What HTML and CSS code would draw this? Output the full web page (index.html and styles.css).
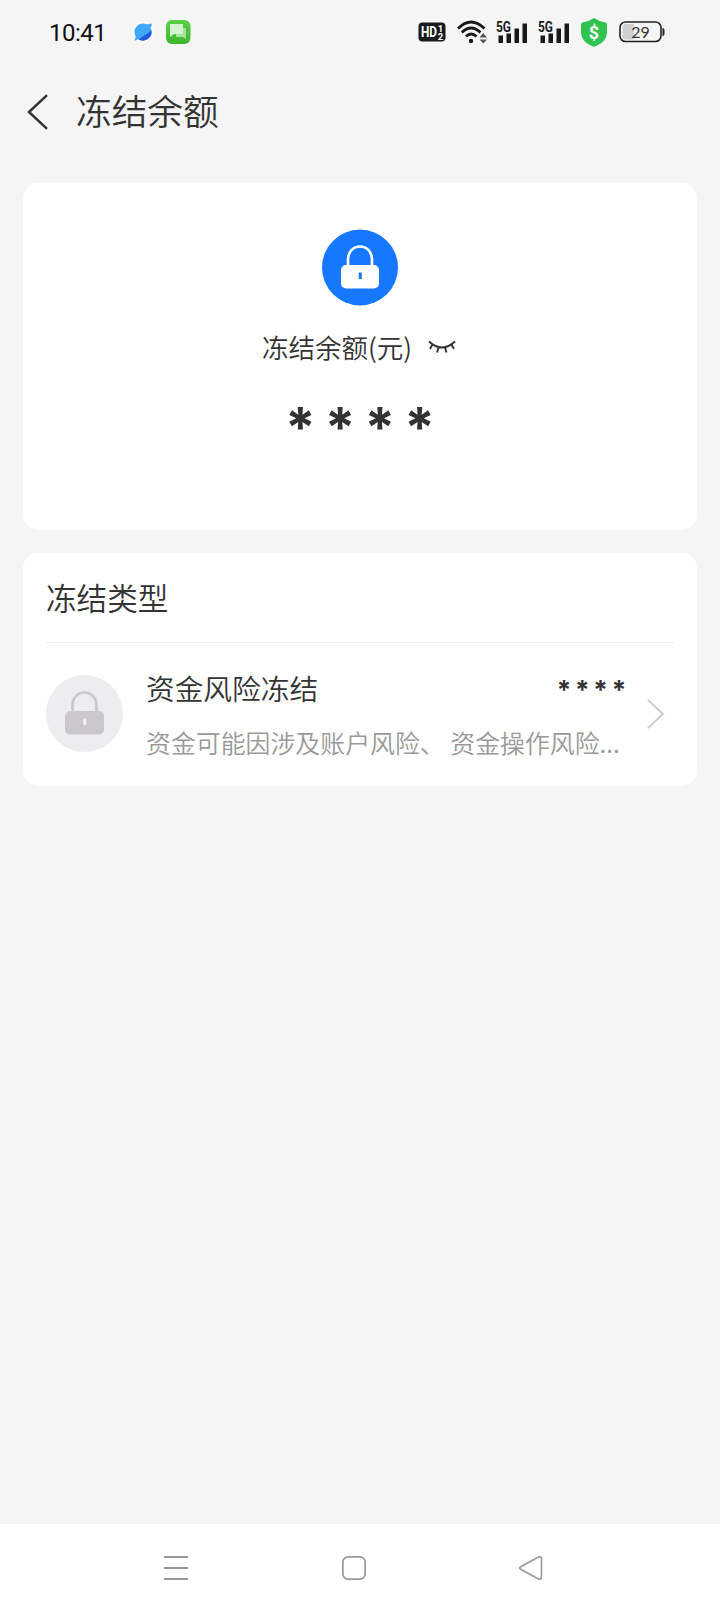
FILE: index.html
```
<!DOCTYPE html>
<html lang="zh-CN">
<head>
    <meta charset="UTF-8">
    <meta name="viewport" content="width=device-width, initial-scale=1.0">
    <title>冻结余额</title>
    <link rel="stylesheet" href="styles.css">
</head>
<body>

<!-- Status bar -->
<div class="status-bar">
    <span class="time">10:41</span>
    <svg class="app-icons" width="60" height="26" viewBox="0 0 60 26">
        <defs>
            <linearGradient id="green" x1="0" y1="0" x2="0" y2="1">
                <stop offset="0" stop-color="#5ad045"/>
                <stop offset="1" stop-color="#3db52f"/>
            </linearGradient>
        </defs>
        <rect x="0" y="2" width="23" height="23" rx="6" fill="#f8f8fa"/>
        <circle cx="11" cy="13" r="8.500" fill="#41a9fb"/>
        <path d="M19.300 11A8.500 8.500 0 0 1 5.500 19.500Q14 17 19.300 11z" fill="#1c5de6"/>
        <path d="M3 20.500Q1.500 22 4 21.200Q14 17 19.500 7Q20.500 4 18.500 4.600L14 6L4 16z" fill="#41a9fb"/>
        <rect x="34" y="1" width="24.500" height="24" rx="6" fill="url(#green)"/>
        <path d="M44 9h10v11l-3-2h-7z" fill="#a5e29a"/>
        <path d="M38 5h13v10h-9l-4 3z" fill="#d5f3d0"/>
    </svg>

    <div class="status-icons">
        <svg width="28" height="20" viewBox="0 0 28 20">
            <rect x="0.500" y="0.500" width="27" height="19" rx="4" fill="#191919"/>
            <text x="3" y="15" textLength="16" lengthAdjust="spacingAndGlyphs" class="hd">HD</text>
            <text x="19.800" y="9.500" class="hd-num">1</text>
            <text x="19.800" y="17.500" class="hd-num">2</text>
        </svg>
        <svg class="wifi" width="31" height="26" viewBox="0 0 31 26">
            <g fill="none" stroke="#191919" stroke-width="2.800">
                <path d="M1 9.500Q14 -3.500 27.500 9.500"/>
                <path d="M4.800 13.500Q14 4.500 23.500 13.500"/>
                <path d="M9 17.500Q14 12.500 19.500 17.500"/>
            </g>
            <circle cx="14" cy="22" r="2.200" fill="#191919"/>
            <path d="M22.500 18.500h7.500l-3.750-4.500zM22.500 20.500h7.500l-3.750 4z" fill="#555"/>
        </svg>
        <svg class="signal" width="34" height="32" viewBox="-1 -4 34 32">
            <path d="M2.500 15.500h4.500V23h-4.500zM10.500 13.500h4.500V23h-4.500zM18.500 8.500h4.500V23h-4.500zM26.500 3.500h4.500V23h-4.500z" fill="#191919"/>
            <text x="0" y="12" textLength="15" lengthAdjust="spacingAndGlyphs" class="net">5G</text>
        </svg>
        <svg class="signal" width="34" height="32" viewBox="-1 -4 34 32">
            <path d="M2.500 15.500h4.500V23h-4.500zM10.500 13.500h4.500V23h-4.500zM18.500 8.500h4.500V23h-4.500zM26.500 3.500h4.500V23h-4.500z" fill="#191919"/>
            <text x="0" y="12" textLength="15" lengthAdjust="spacingAndGlyphs" class="net">5G</text>
        </svg>
        <svg class="shield" width="26" height="29" viewBox="0 0 26 29">
            <path d="M13 0Q18 3.500 24.500 4.500Q26 4.800 26 6.500V15Q26 24 13 29Q0 24 0 15V6.500Q0 4.800 1.500 4.500Q8 3.500 13 0z" fill="#30c351"/>
            <text x="13" y="20.500" class="dollar">$</text>
        </svg>
        <svg class="battery" width="46" height="22" viewBox="0 0 46 22">
            <rect x="1" y="1" width="41" height="19.500" rx="5.500" fill="none" stroke="#222" stroke-width="1.600"/>
            <path d="M7 3H15V18.500H7Q3.500 18.500 3.500 15V6.500Q3.500 3 7 3z" fill="#cfcfcf"/>
            <path d="M43.500 7Q45.500 7 45.500 9V13Q45.500 15 43.500 15z" fill="#222"/>
            <text x="21.500" y="16.500" class="percent">29</text>
        </svg>
    </div>
</div>

<!-- Page header -->
<div class="header">
    <svg width="22" height="36" viewBox="0 0 22 36">
        <path d="M20 1.200L2 18L20 34.800" fill="none" stroke="#333" stroke-width="2.500"/>
    </svg>
    <h1>冻结余额</h1>
</div>

<!-- Balance card -->
<div class="card balance">
    <svg width="77" height="77" viewBox="0 0 77 77">
        <circle cx="38" cy="38.500" r="38" fill="#1677ff"/>
        <path d="M26 38V30a12 12.500 0 0 1 24 0V38" fill="none" stroke="#fff" stroke-width="2.700"/>
        <rect x="19" y="36" width="38" height="23.500" rx="5" fill="#fff"/>
        <rect x="36.800" y="43.500" width="3" height="6.500" fill="#1677ff"/>
    </svg>
    <div class="balance-label">
        <span>冻结余额(元)</span>
        <svg width="28" height="14" viewBox="0 0 28 14">
            <path d="M1 1.500Q14 13.500 27 1.500M4.500 4.500L2 9M10.500 7.500L9 12.500M17 7.500L18.500 12.500M23.500 4.500L26 9" fill="none" stroke="#333" stroke-width="1.900"/>
        </svg>
    </div>
    <div class="balance-amount">****</div>
</div>

<!-- Freeze types -->
<div class="card types">
    <h2>冻结类型</h2>
    <div class="type-item">
        <svg width="77" height="77" viewBox="0 0 77 77">
            <circle cx="38.500" cy="38.500" r="38.500" fill="#edecef"/>
            <path d="M26.500 38V30a12 12.500 0 0 1 24 0V38" fill="none" stroke="#cac8cb" stroke-width="2.700"/>
            <rect x="19" y="36" width="39" height="23.500" rx="5" fill="#cac8cb"/>
            <rect x="37.300" y="43.500" width="3" height="6.500" fill="#f2f1f4"/>
        </svg>
        <div class="type-text">
            <div class="type-top">
                <span class="type-name">资金风险冻结</span>
                <span class="type-amount">****</span>
            </div>
            <p>资金可能因涉及账户风险、 资金操作风险...</p>
        </div>
        <svg class="arrow" width="18" height="30" viewBox="0 0 18 30">
            <path d="M1 1L16 15L1 29" fill="none" stroke="#ccc" stroke-width="2"/>
        </svg>
    </div>
</div>

<!-- System navigation -->
<div class="nav-bar">
    <svg width="24" height="26" viewBox="0 0 24 26">
        <path d="M0 2h24M0 13h24M0 24h24" stroke="#999" stroke-width="1.800"/>
    </svg>
    <svg width="24" height="26" viewBox="0 0 24 26">
        <rect x="0.900" y="1.900" width="22.200" height="22.200" rx="5" fill="none" stroke="#999" stroke-width="1.700"/>
    </svg>
    <svg width="24" height="26" viewBox="0 0 24 26">
        <path d="M1.700 11.800L19.500 2Q22.500 1 22.500 4V22Q22.500 25 19.500 24L1.700 14.300Q-0.200 13 1.700 11.800z" fill="none" stroke="#999" stroke-width="1.600"/>
    </svg>
</div>

</body>
</html>
```
FILE: styles.css
```
* {
    box-sizing: border-box;
    margin: 0;
    padding: 0;
}

body {
    display: flex;
    flex-direction: column;
    height: 1612px;
    background: #f5f5f5;
    color: #333;
    font-family: "Noto Sans CJK SC", sans-serif;
    font-weight: 350;
}

svg {
    display: block;
    flex-shrink: 0;
}

h1, h2 {
    font-weight: 350;
}

.status-bar {
    display: flex;
    align-items: center;
    height: 64px;
    padding: 0 55px 0 49px;
}

.time {
    width: 83px;
    padding-top: 2px;
    font-family: Roboto, sans-serif;
    font-size: 24px;
    font-weight: 400;
    letter-spacing: -0.5px;
    color: #111;
}

.status-icons {
    display: flex;
    align-items: center;
    margin-left: auto;
}

.wifi {
    margin: 0 7px 0 11px;
}

.signal {
    margin-right: 8px;
}

.shield {
    margin: 0 12px 0 2px;
}

.hd, .hd-num, .net, .dollar {
    font-family: Roboto, sans-serif;
    font-weight: bold;
}

.hd {
    font-size: 14.5px;
    fill: #fff;
}

.hd-num {
    font-size: 9.5px;
    fill: #fff;
}

.net {
    font-size: 15px;
    fill: #191919;
}

.dollar {
    font-size: 18px;
    text-anchor: middle;
    fill: #fff;
}

.percent {
    font-family: Lato, sans-serif;
    font-size: 16px;
    font-weight: 400;
    text-anchor: middle;
    fill: #333;
}

.header {
    display: flex;
    align-items: center;
    gap: 27px;
    height: 96px;
    padding-left: 27px;
}

.header h1 {
    padding-bottom: 4px;
    font-size: 35.7px;
    line-height: 50px;
}

.card {
    margin: 23px 23px 0;
    background: #fff;
    border-radius: 15px;
}

.balance {
    display: flex;
    flex-direction: column;
    align-items: center;
    height: 347px;
    padding-top: 46px;
}

.balance-label {
    display: flex;
    align-items: center;
    gap: 16px;
    margin-top: 21px;
    padding-right: 2px;
    font-size: 26.5px;
    line-height: 40px;
}

.balance-amount {
    margin-top: 30px;
    padding-left: 9px;
    font-family: Inter, sans-serif;
    font-size: 55px;
    font-weight: 700;
    line-height: 60px;
    letter-spacing: 9px;
}

.types {
    padding: 0 23px;
}

.types h2 {
    height: 90px;
    border-bottom: 1px solid #eee;
    font-size: 30.6px;
    line-height: 88px;
}

.type-item {
    display: flex;
    align-items: center;
    height: 143px;
    padding: 0 9px 2px 0;
}

.type-text {
    width: 484px;
    margin-left: 23px;
    padding-top: 3px;
}

.type-top {
    display: flex;
    justify-content: space-between;
    height: 55px;
    line-height: 56px;
}

.type-name {
    font-size: 28.7px;
}

.type-amount {
    font-family: Inter, sans-serif;
    font-size: 26px;
    font-weight: 700;
    line-height: 59px;
    letter-spacing: 3.8px;
}

.type-text p {
    font-size: 24.9px;
    line-height: 55px;
    color: #999;
    white-space: nowrap;
}

.arrow {
    margin-left: auto;
}

.nav-bar {
    display: flex;
    align-items: center;
    justify-content: space-between;
    height: 88px;
    margin-top: auto;
    padding: 0 177px 0 164px;
    background: #fff;
}
```
